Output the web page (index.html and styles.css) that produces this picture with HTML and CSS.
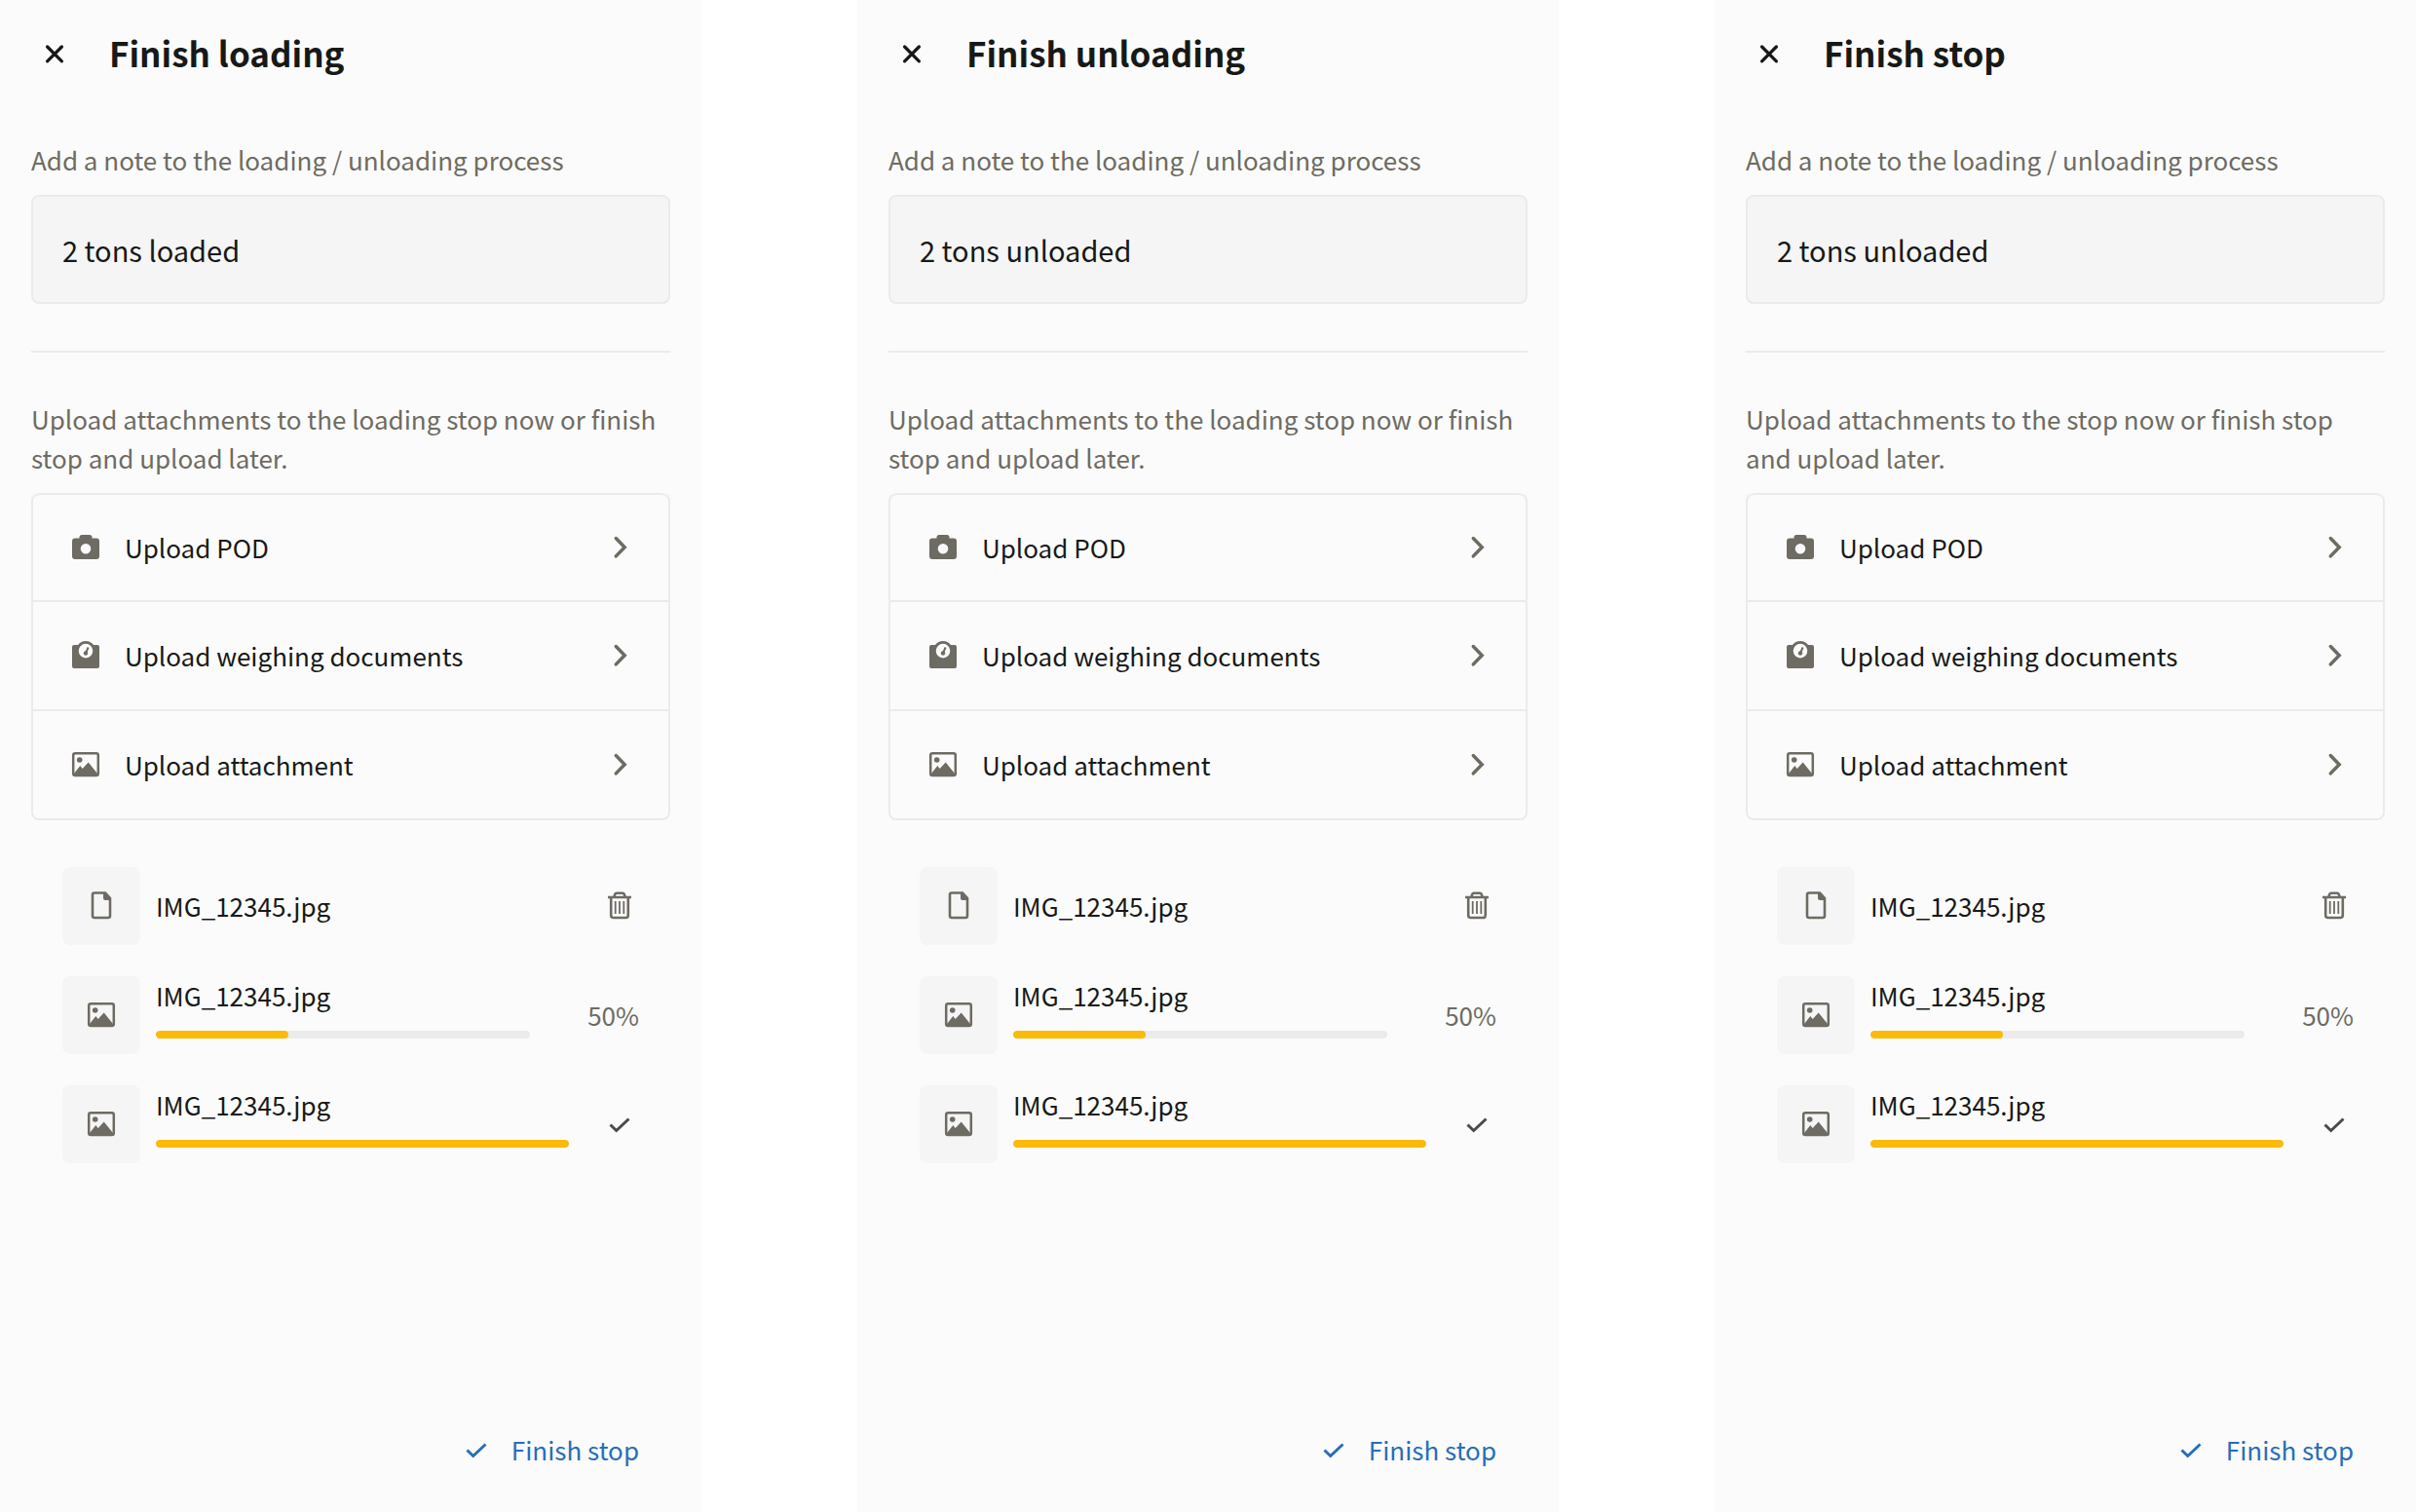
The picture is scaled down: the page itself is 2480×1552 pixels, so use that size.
FILE: index.html
```html
<!DOCTYPE html>
<html lang="en">
<head>
<meta charset="utf-8">
<meta name="viewport" content="width=device-width, initial-scale=1">
<title>Finish stop</title>
<link rel="stylesheet" href="styles.css">
</head>
<body>
<svg class="sprite" aria-hidden="true">
  <symbol id="close" viewBox="0 0 32 32"><path d="M8.600 8L23.400 22.800M23.400 8L8.600 22.800" fill="none" stroke="currentColor" stroke-width="3.300" stroke-linecap="round"/></symbol>
  <symbol id="camera" viewBox="0 0 32 32"><path fill="currentColor" fill-rule="evenodd" d="M5 6.500H9.500V5.500Q9.500 3 12 3H20Q22.500 3 22.500 5.500V6.500H27Q30 6.500 30 9.500V25Q30 28 27 28H5Q2 28 2 25V9.500Q2 6.500 5 6.500ZM16 12A5.300 5.300 0 1 0 16 22.600A5.300 5.300 0 1 0 16 12Z"/></symbol>
  <symbol id="scale" viewBox="0 0 32 32"><path fill="currentColor" fill-rule="evenodd" d="M4 5H8Q11 1 16 1T24 5H28Q30 5 30 7V27Q30 29 28 29H4Q2 29 2 27V7Q2 5 4 5ZM16 3.800A7.300 7.300 0 1 0 16 18.400A7.300 7.300 0 1 0 16 3.800Z"/><circle cx="16" cy="13.500" r="2.200" fill="currentColor"/><path d="M16.200 13L18.600 7.500" stroke="currentColor" stroke-width="2"/></symbol>
  <symbol id="image" viewBox="0 0 32 32"><rect x="3.200" y="4.200" width="25.600" height="22.800" rx="2" fill="none" stroke="currentColor" stroke-width="2.500"/><circle cx="9.700" cy="11" r="2.800" fill="currentColor"/><path fill="currentColor" d="M4 25L10.300 17L12.700 20L18.700 13.500L28 25V27H4Z"/></symbol>
  <symbol id="file" viewBox="0 0 32 32"><path d="M9 2.500H20L25 8V26Q25 28 23 28H9Q7 28 7 26V4.500Q7 2.500 9 2.500Z" fill="none" stroke="currentColor" stroke-width="2.600"/><path d="M18 2H20.500L26 8V10H20Q18 10 18 8Z" fill="currentColor"/></symbol>
  <symbol id="trash" viewBox="0 0 32 32"><g fill="none" stroke="currentColor"><path stroke-width="2.600" d="M4 7H28M7.200 7V25.500Q7.200 28 9.700 28H22.300Q24.800 28 24.800 25.500V7M10.700 7V5.500Q11.200 2.700 13 2.700H19Q20.800 2.700 21.300 5.500V7"/><path stroke-width="1.800" d="M11.700 11V24M16 11V24M20.300 11V24"/></g></symbol>
  <symbol id="check" viewBox="0 0 32 32"><path d="M6.500 16.500L12.700 22.500L25.500 10.500" fill="none" stroke="currentColor" stroke-width="3"/></symbol>
  <symbol id="chevron" viewBox="0 0 32 32"><path d="M12.300 6.500L21.200 15.700L12.300 24.900" fill="none" stroke="currentColor" stroke-width="3.500" stroke-linecap="round"/></symbol>
</svg>

<main class="screens">
  <section class="screen">
    <header class="header">
      <button class="close" type="button" aria-label="Close"><svg class="icon"><use href="#close"/></svg></button>
      <h1 class="title">Finish loading</h1>
    </header>
    <div class="content">
      <label class="hint" for="note-1">Add a note to the loading / unloading process</label>
      <input class="note" id="note-1" type="text" value="2 tons loaded">
      <hr class="divider">
      <p class="hint">Upload attachments to the loading stop now or finish stop and upload later.</p>
      <div class="actions">
        <button class="action" type="button"><svg class="icon"><use href="#camera"/></svg><span class="label">Upload POD</span><svg class="icon"><use href="#chevron"/></svg></button>
        <button class="action" type="button"><svg class="icon"><use href="#scale"/></svg><span class="label">Upload weighing documents</span><svg class="icon"><use href="#chevron"/></svg></button>
        <button class="action" type="button"><svg class="icon"><use href="#image"/></svg><span class="label">Upload attachment</span><svg class="icon"><use href="#chevron"/></svg></button>
      </div>
      <ul class="files">
        <li class="file">
          <span class="thumb"><svg class="icon"><use href="#file"/></svg></span>
          <div class="info"><span class="name">IMG_12345.jpg</span></div>
          <button class="delete" type="button" aria-label="Delete IMG_12345.jpg"><svg class="icon"><use href="#trash"/></svg></button>
        </li>
        <li class="file">
          <span class="thumb"><svg class="icon"><use href="#image"/></svg></span>
          <div class="info"><span class="name">IMG_12345.jpg</span><div class="track"><div class="fill" style="width: 35.4%"></div></div></div>
          <span class="percent">50%</span>
        </li>
        <li class="file">
          <span class="thumb"><svg class="icon"><use href="#image"/></svg></span>
          <div class="info"><span class="name">IMG_12345.jpg</span><div class="track"><div class="fill" style="width: 100%"></div></div></div>
          <span class="done"><svg class="icon"><use href="#check"/></svg></span>
        </li>
      </ul>
    </div>
    <footer class="footer"><button class="finish" type="button"><svg class="icon"><use href="#check"/></svg>Finish stop</button></footer>
  </section>

  <section class="screen">
    <header class="header">
      <button class="close" type="button" aria-label="Close"><svg class="icon"><use href="#close"/></svg></button>
      <h1 class="title">Finish unloading</h1>
    </header>
    <div class="content">
      <label class="hint" for="note-2">Add a note to the loading / unloading process</label>
      <input class="note" id="note-2" type="text" value="2 tons unloaded">
      <hr class="divider">
      <p class="hint">Upload attachments to the loading stop now or finish stop and upload later.</p>
      <div class="actions">
        <button class="action" type="button"><svg class="icon"><use href="#camera"/></svg><span class="label">Upload POD</span><svg class="icon"><use href="#chevron"/></svg></button>
        <button class="action" type="button"><svg class="icon"><use href="#scale"/></svg><span class="label">Upload weighing documents</span><svg class="icon"><use href="#chevron"/></svg></button>
        <button class="action" type="button"><svg class="icon"><use href="#image"/></svg><span class="label">Upload attachment</span><svg class="icon"><use href="#chevron"/></svg></button>
      </div>
      <ul class="files">
        <li class="file">
          <span class="thumb"><svg class="icon"><use href="#file"/></svg></span>
          <div class="info"><span class="name">IMG_12345.jpg</span></div>
          <button class="delete" type="button" aria-label="Delete IMG_12345.jpg"><svg class="icon"><use href="#trash"/></svg></button>
        </li>
        <li class="file">
          <span class="thumb"><svg class="icon"><use href="#image"/></svg></span>
          <div class="info"><span class="name">IMG_12345.jpg</span><div class="track"><div class="fill" style="width: 35.4%"></div></div></div>
          <span class="percent">50%</span>
        </li>
        <li class="file">
          <span class="thumb"><svg class="icon"><use href="#image"/></svg></span>
          <div class="info"><span class="name">IMG_12345.jpg</span><div class="track"><div class="fill" style="width: 100%"></div></div></div>
          <span class="done"><svg class="icon"><use href="#check"/></svg></span>
        </li>
      </ul>
    </div>
    <footer class="footer"><button class="finish" type="button"><svg class="icon"><use href="#check"/></svg>Finish stop</button></footer>
  </section>

  <section class="screen">
    <header class="header">
      <button class="close" type="button" aria-label="Close"><svg class="icon"><use href="#close"/></svg></button>
      <h1 class="title">Finish stop</h1>
    </header>
    <div class="content">
      <label class="hint" for="note-3">Add a note to the loading / unloading process</label>
      <input class="note" id="note-3" type="text" value="2 tons unloaded">
      <hr class="divider">
      <p class="hint">Upload attachments to the stop now or finish stop and upload later.</p>
      <div class="actions">
        <button class="action" type="button"><svg class="icon"><use href="#camera"/></svg><span class="label">Upload POD</span><svg class="icon"><use href="#chevron"/></svg></button>
        <button class="action" type="button"><svg class="icon"><use href="#scale"/></svg><span class="label">Upload weighing documents</span><svg class="icon"><use href="#chevron"/></svg></button>
        <button class="action" type="button"><svg class="icon"><use href="#image"/></svg><span class="label">Upload attachment</span><svg class="icon"><use href="#chevron"/></svg></button>
      </div>
      <ul class="files">
        <li class="file">
          <span class="thumb"><svg class="icon"><use href="#file"/></svg></span>
          <div class="info"><span class="name">IMG_12345.jpg</span></div>
          <button class="delete" type="button" aria-label="Delete IMG_12345.jpg"><svg class="icon"><use href="#trash"/></svg></button>
        </li>
        <li class="file">
          <span class="thumb"><svg class="icon"><use href="#image"/></svg></span>
          <div class="info"><span class="name">IMG_12345.jpg</span><div class="track"><div class="fill" style="width: 35.4%"></div></div></div>
          <span class="percent">50%</span>
        </li>
        <li class="file">
          <span class="thumb"><svg class="icon"><use href="#image"/></svg></span>
          <div class="info"><span class="name">IMG_12345.jpg</span><div class="track"><div class="fill" style="width: 100%"></div></div></div>
          <span class="done"><svg class="icon"><use href="#check"/></svg></span>
        </li>
      </ul>
    </div>
    <footer class="footer"><button class="finish" type="button"><svg class="icon"><use href="#check"/></svg>Finish stop</button></footer>
  </section>
</main>
</body>
</html>
```

FILE: styles.css
```css
:root {
  --ink: #171917;
  --muted: #6e6b62;
  --line: #ebebeb;
  --soft: #f5f5f5;
  --accent: #fbba07;
  --link: #266eb9;
}

* {
  box-sizing: border-box;
}

body {
  margin: 0;
  background: #fff;
  color: var(--ink);
  font-family: "Noto Sans CJK SC", "Noto Sans", sans-serif;
  font-size: 26px;
  line-height: 40px;
}

button {
  padding: 0;
  border: 0;
  background: none;
  color: inherit;
  font: inherit;
  cursor: pointer;
}

.sprite {
  display: none;
}

.icon {
  display: block;
  flex: none;
  width: 32px;
  height: 32px;
}

.screens {
  display: grid;
  grid-template-columns: repeat(3, 1fr);
  gap: 160px;
  min-height: 100vh;
}

.screen {
  display: flex;
  flex-direction: column;
  background: #fbfbfb;
}

.header {
  display: flex;
  align-items: center;
  gap: 40px;
  height: 112px;
  padding: 0 40px;
}

.title {
  margin: 0;
  padding-bottom: 4px;
  font-size: 35px;
  font-weight: 700;
}

.content {
  flex: 1;
  padding: 32px 32px 0;
}

.hint {
  display: block;
  margin: 0 0 16px;
  padding-right: 8px;
  color: var(--muted);
}

.note {
  display: block;
  width: 100%;
  height: 112px;
  padding: 0 30px;
  border: 2px solid var(--line);
  border-radius: 8px;
  background: var(--soft);
  color: inherit;
  font: inherit;
  font-size: 29px;
}

.divider {
  height: 2px;
  margin: 48px 0;
  border: 0;
  background: var(--line);
}

.actions {
  border: 2px solid var(--line);
  border-top-width: 0;
  border-radius: 8px;
}

.action {
  display: flex;
  align-items: center;
  gap: 24px;
  width: 100%;
  height: 112px;
  padding: 0 34px 0 38px;
  border-bottom: 2px solid var(--line);
  text-align: left;
}

.action:first-child {
  border-top: 2px solid var(--line);
  border-radius: 8px 8px 0 0;
}

.action:last-child {
  height: 110px;
  border-bottom: 0;
}

.action .icon,
.thumb,
.delete {
  color: var(--muted);
}

.label {
  flex: 1;
}

.files {
  display: grid;
  gap: 32px;
  margin: 0;
  padding: 48px 32px 0;
  list-style: none;
}

.file {
  display: flex;
  align-items: center;
  gap: 16px;
}

.thumb {
  display: grid;
  place-items: center;
  width: 80px;
  height: 80px;
  border-radius: 8px;
  background: var(--soft);
}

.info {
  display: grid;
  flex: 1;
  gap: 16px;
}

.track {
  height: 8px;
  margin-bottom: 16px;
  overflow: hidden;
  border-radius: 4px;
  background: var(--line);
}

.fill {
  height: 100%;
  border-radius: 4px;
  background: var(--accent);
}

.percent {
  width: 96px;
  color: var(--muted);
  text-align: right;
}

.delete,
.done {
  display: flex;
  justify-content: flex-end;
  width: 56px;
  padding-right: 4px;
}

.done {
  color: #484c49;
}

.footer {
  display: flex;
  justify-content: flex-end;
  padding: 0 64px 32px;
}

.finish {
  display: flex;
  align-items: center;
  gap: 20px;
  height: 64px;
  color: var(--link);
}
```
